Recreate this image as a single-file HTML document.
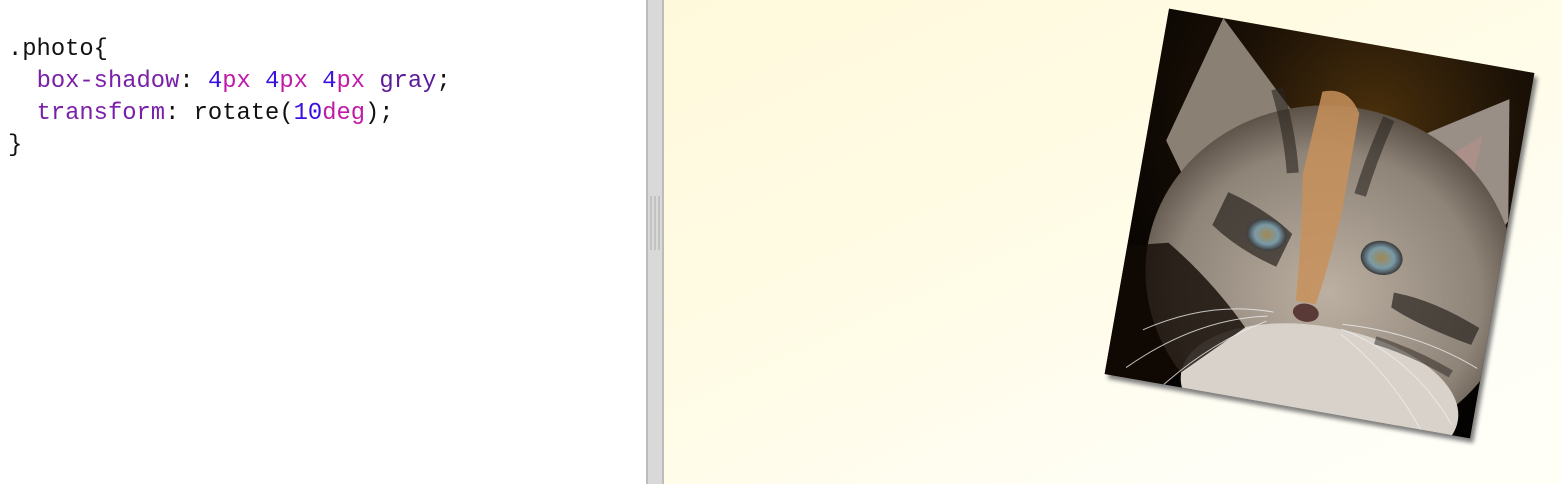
<!DOCTYPE html>
<html><head><style>
html,body{margin:0;padding:0;width:1562px;height:484px;overflow:hidden;background:#fff}
#code{position:absolute;left:0;top:0;width:646px;height:484px;background:#fff}
pre{position:absolute;left:8px;top:34px;margin:0;font-family:"Liberation Mono",monospace;font-size:23.8px;line-height:32px;color:#111}
.p{color:#7a1fa8}.n{color:#3a10e0}.u{color:#c01aa8}.k{color:#5a1a9a}
#div{position:absolute;left:646px;top:0;width:18px;height:484px;background:#d9d9d9;border-left:2px solid #bcbcbc;border-right:2px solid #bcbcbc;box-sizing:border-box}
.g{position:absolute;top:196px;width:2px;height:54px;background:#c2c2c2}
#view{position:absolute;left:664px;top:0;width:898px;height:484px;background:linear-gradient(155deg,#fff9dc 0%,#fffbe4 40%,#fffef6 80%,#fffff8 100%)}
#photo{position:absolute;left:1134px;top:38px;width:371px;height:371px;transform:rotate(10deg);box-shadow:4px 4px 4px gray;background:#2a1a08;overflow:hidden}
</style></head><body>
<div id="code"><pre>.photo{
  <span class="p">box-shadow</span>: <span class="n">4</span><span class="u">px</span> <span class="n">4</span><span class="u">px</span> <span class="n">4</span><span class="u">px</span> <span class="k">gray</span>;
  <span class="p">transform</span>: rotate(<span class="n">10</span><span class="u">deg</span>);
}</pre></div>
<div id="div"><div class="g" style="left:2px"></div><div class="g" style="left:6px"></div><div class="g" style="left:10px"></div></div>
<div id="view"></div>
<div id="photo">
<svg width="371" height="371" viewBox="0 0 370 370">
<defs>
<radialGradient id="bg" cx="0.6" cy="0.2" r="0.8"><stop offset="0" stop-color="#4a300c"/><stop offset="0.5" stop-color="#1a1006"/><stop offset="1" stop-color="#050302"/></radialGradient>
<radialGradient id="head" cx="0.5" cy="0.55" r="0.55"><stop offset="0" stop-color="#bcb0a2"/><stop offset="0.75" stop-color="#8e8478"/><stop offset="1" stop-color="#5a5046"/></radialGradient>
<radialGradient id="eye" cx="0.5" cy="0.5" r="0.5"><stop offset="0" stop-color="#a08850"/><stop offset="0.6" stop-color="#7a9aa8"/><stop offset="1" stop-color="#3a3a3a"/></radialGradient>
</defs>
<rect width="370" height="370" fill="url(#bg)"/>
<path d="M55 0 L150 90 L70 200 L20 130 Z" fill="#8a8074"/>
<path d="M350 30 L240 100 L330 230 L370 150 Z" fill="#9a8f86"/>
<path d="M330 70 L280 115 L325 180 Z" fill="#b8908c" opacity="0.6"/>
<ellipse cx="205" cy="235" rx="185" ry="170" fill="url(#head)"/>
<ellipse cx="215" cy="355" rx="140" ry="70" fill="#d8d2ca"/>
<path d="M40 230 Q90 260 130 300 L60 370 L0 370 L0 240 Z" fill="#120a04" opacity="0.8"/>
<path d="M165 55 Q190 45 205 70 L205 170 Q200 240 195 265 L175 265 Q170 200 160 140 Z" fill="#c8905a" opacity="0.85"/>
<path d="M120 60 Q140 100 150 140" stroke="#2a2420" stroke-width="12" fill="none" opacity="0.6"/>
<path d="M235 70 Q225 110 220 150" stroke="#2a2420" stroke-width="12" fill="none" opacity="0.6"/>
<path d="M90 170 Q130 180 160 200 L150 235 Q110 225 80 205 Z" fill="#2a2420" opacity="0.7"/>
<path d="M270 240 Q310 240 360 260 L355 278 Q300 268 270 255 Z" fill="#2a2420" opacity="0.7"/>
<path d="M260 290 Q300 295 340 310" stroke="#2a2420" stroke-width="8" fill="none" opacity="0.5"/>
<ellipse cx="135" cy="205" rx="20" ry="16" fill="url(#eye)"/>
<ellipse cx="252" cy="208" rx="21" ry="17" fill="url(#eye)"/>
<ellipse cx="187" cy="275" rx="13" ry="9" fill="#5a3a36"/>
<g stroke="#eee" stroke-width="1" fill="none" opacity="0.8">
<path d="M150 285 Q80 300 20 360"/><path d="M150 290 Q100 320 60 370"/><path d="M155 280 Q90 280 30 320"/>
<path d="M225 285 Q300 300 350 360"/><path d="M225 290 Q280 320 320 370"/><path d="M225 280 Q300 275 365 300"/>
</g>
</svg>
</div>
</body></html>
